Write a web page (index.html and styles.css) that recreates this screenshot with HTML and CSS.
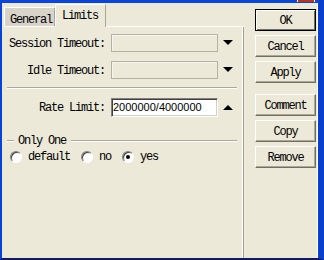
FILE: index.html
```html
<!DOCTYPE html>
<html lang="en">

<head>
  <meta charset="UTF-8">
  <title>Limits</title>
  <link rel="stylesheet" href="styles.css">
</head>

<body>
  <div class="window">
    <div class="caption"><span class="close"></span></div>
    <div class="frame">
      <div class="main">
        <div class="tabs">
          <div class="tab">General</div>
          <div class="tab active">Limits</div>
          <div class="tab-fill"></div>
        </div>
        <div class="panel">
          <div class="row">
            <label class="label">Session Timeout:</label>
            <div class="field disabled"></div>
            <span class="arrow down"></span>
          </div>
          <div class="row">
            <label class="label">Idle Timeout:</label>
            <div class="field disabled"></div>
            <span class="arrow down"></span>
          </div>
          <div class="sep"></div>
          <div class="row">
            <label class="label">Rate Limit:</label>
            <div class="field edit">2000000/4000000</div>
            <span class="arrow up"></span>
          </div>
          <div class="group">
            <span class="group-line short"></span>
            <span class="group-title">Only One</span>
            <span class="group-line"></span>
          </div>
          <div class="radios">
            <div class="radio"><span class="dot"></span>default</div>
            <div class="radio"><span class="dot"></span>no</div>
            <div class="radio"><span class="dot checked"></span>yes</div>
          </div>
        </div>
      </div>
      <div class="buttons">
        <div class="btn default">OK</div>
        <div class="btn">Cancel</div>
        <div class="btn">Apply</div>
        <div class="btn gap">Comment</div>
        <div class="btn">Copy</div>
        <div class="btn">Remove</div>
      </div>
    </div>
  </div>
</body>

</html>
```

FILE: styles.css
```css
* {
  padding: 0;
  margin: 0;
  box-sizing: border-box;
}

body {
  background: #ece9d8;
  font-family: "Liberation Mono", monospace;
  font-size: 12px;
  letter-spacing: -1.2px;
  white-space: nowrap;
  color: #000;
}

.window {
  width: 324px;
  height: 260px;
  display: flex;
  flex-direction: column;
  background: #ece9d8;
  border-left: 2px solid #0842d6;
  border-right: 6px solid #0a3fce;
  border-bottom: 2px solid #0d1a5c;
}

.caption {
  height: 3px;
  background: #0a46dc;
  display: flex;
  justify-content: flex-end;
  padding-right: 3px;
}

.close {
  width: 18px;
  height: 2px;
  background: #b8341c;
  border-left: 1px solid #fff;
  border-right: 1px solid #fff;
}

.frame {
  flex: 1;
  display: flex;
  border-right: 1px solid #fdfdfb;
}

.main {
  width: 242px;
  display: flex;
  flex-direction: column;
}

/* tabs */
.tabs {
  height: 24px;
  display: flex;
  align-items: flex-end;
  padding-left: 2px;
}

.tab {
  width: 51px;
  height: 20px;
  padding: 5px 0 0 5px;
  background: #d8d4ca;
  border-top: 1px solid #fff;
  border-left: 1px solid #fff;
  border-right: 1px solid #a9a69a;
  border-bottom: 1px solid #fff;
}

.tab.active {
  height: 23px;
  padding: 4px 0 0 6px;
  background: #ece9d8;
  border-bottom: none;
}

.tab-fill {
  flex: 1;
  height: 1px;
  background: #fff;
}

.panel {
  flex: 1;
  padding: 7px 0 0 6px;
  border-right: 1px solid #a5a192;
  box-shadow: inset -1px 0 #fff;
}

.row {
  display: flex;
  align-items: center;
  height: 18px;
  margin-bottom: 9px;
}

.label {
  width: 97px;
  text-align: right;
  margin-right: 6px;
  padding-top: 1px;
}

.field {
  width: 107px;
  height: 18px;
}

.field.disabled {
  border: 1px solid #b4b0a2;
  box-shadow: inset 1px 1px #f5f4ee;
}

.field.edit {
  height: 19px;
  background: #fff;
  border-top: 1px solid #808080;
  border-left: 1px solid #808080;
  border-right: 1px solid #fff;
  border-bottom: 1px solid #fff;
  box-shadow: inset 1px 1px #404040, inset -1px -1px #d4d0c8;
  font-family: "Liberation Sans", Arial, sans-serif;
  font-size: 11px;
  letter-spacing: 0;
  line-height: 17px;
  padding-left: 1px;
}

.arrow {
  width: 0;
  height: 0;
  margin-left: 5px;
  border-left: 5px solid transparent;
  border-right: 5px solid transparent;
}

.arrow.down {
  border-top: 5px solid #000;
  margin-top: -1px;
}

.arrow.up {
  border-bottom: 5px solid #000;
}

.sep {
  width: 230px;
  height: 2px;
  margin: -1px 0 9px -1px;
  border-top: 1px solid #aca899;
  border-bottom: 1px solid #fff;
}

.row + .group {
  margin-top: 18px;
}

.group {
  display: flex;
  align-items: center;
  width: 230px;
  margin-left: -1px;
}

.group-line {
  flex: 1;
  height: 2px;
  border-top: 1px solid #aca899;
  border-bottom: 1px solid #fff;
}

.group-line.short {
  flex: none;
  width: 7px;
}

.group-title {
  padding: 0 5px 0 4px;
}

.radios {
  display: flex;
  gap: 11px;
  margin: 2px 0 0 2px;
}

.radio {
  display: flex;
  align-items: center;
  gap: 6px;
}

.dot {
  width: 12px;
  height: 12px;
  border-radius: 50%;
  background: #fff;
  border: 1px solid;
  border-color: #808080 #fff #fff #808080;
  box-shadow: inset 1px 1px #404040;
  display: flex;
  align-items: center;
  justify-content: center;
}

.dot.checked::after {
  content: "";
  width: 4px;
  height: 4px;
  border-radius: 50%;
  background: #000;
}

/* buttons */
.buttons {
  width: 61px;
  margin-left: 11px;
  padding-top: 6px;
  display: flex;
  flex-direction: column;
  gap: 4px;
}

.btn {
  height: 22px;
  display: flex;
  align-items: center;
  justify-content: center;
  padding-top: 1px;
  border: 1px solid;
  border-color: #fff #716f64 #716f64 #fff;
  box-shadow: inset -1px -1px #aca899;
}

.btn.default {
  border: 1px solid #000;
  box-shadow: inset 1px 1px #fff, inset -1px -1px #716f64;
}

.btn.gap {
  margin-top: 7px;
}
```
